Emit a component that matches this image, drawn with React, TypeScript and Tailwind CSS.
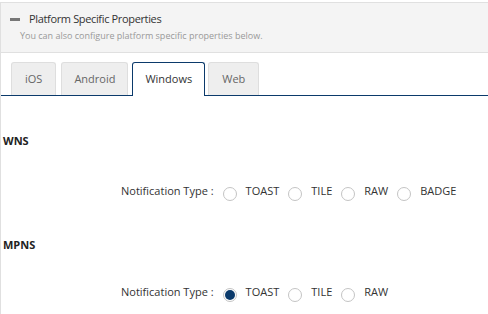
import React from "react";

function Radio({ checked }: { checked?: boolean }) {
  return (
    <span className="flex items-center justify-center w-[14px] h-[14px] rounded-full border border-[#c4c4c4] bg-white shrink-0 mt-[5px]">
      {checked && <span className="block w-[10px] h-[10px] rounded-full bg-[#0b3a6b]" />}
    </span>
  );
}

function Row({ options, checkedIndex }: { options: string[]; checkedIndex: number }) {
  return (
    <div className="flex items-start h-[18px] pl-[120px] text-[11px] leading-[18px] text-[#333]">
      <span className="mr-[9px]">Notification Type :</span>
      {options.map((o, i) => (
        <span key={o} className="flex items-start mr-[9px]">
          <Radio checked={i === checkedIndex} />
          <span className="ml-[9px]">{o}</span>
        </span>
      ))}
    </div>
  );
}

export default function App() {
  return (
    <div
      className="w-[488px] h-[314px] bg-white overflow-hidden pt-[2px]"
      style={{ fontFamily: '"Open Sans", "Noto Sans", sans-serif' }}
    >
      <div className="border-l border-[#e0e0e0] h-full">
        <div className="bg-[#f4f4f4] border-t border-b border-[#e0e0e0] h-[51px] pl-[9px] pt-[7px]">
          <div className="flex items-center h-[18px]">
            <span className="block w-[10px] h-[3px] bg-[#777] mr-[9px]" />
            <span className="text-[11px] tracking-[-0.35px] text-[#333] leading-[18px]">
              Platform Specific Properties
            </span>
          </div>
          <div className="text-[9px] text-[#999] leading-[14px] mt-[1px] pl-[10px]">
            You can also configure platform specific properties below.
          </div>
        </div>
        <div className="flex items-end pl-[10px] pt-[9px] border-b border-[#0b3a6b]">
          <div className="h-[33px] mr-[5px] px-[13px] flex items-center bg-[#eeeeee] border border-b-0 border-[#dedede] rounded-t-[3px] text-[11px] text-[#666]">
            iOS
          </div>
          <div className="h-[33px] mr-[4px] px-[12px] flex items-center bg-[#eeeeee] border border-b-0 border-[#dedede] rounded-t-[3px] text-[11px] text-[#666]">
            Android
          </div>
          <div className="h-[34px] -mb-[1px] mr-[3px] px-[12px] flex items-center bg-white border border-b-0 border-[#0b3a6b] rounded-t-[3px] text-[11px] text-[#333]">
            Windows
          </div>
          <div className="h-[33px] px-[13px] flex items-center bg-[#eeeeee] border border-b-0 border-[#dedede] rounded-t-[3px] text-[11px] text-[#666]">
            Web
          </div>
        </div>
        <div className="pl-[2px] pt-[37px] text-[11px] font-bold text-[#222] leading-[16px]">WNS</div>
        <div className="mt-[33px]">
          <Row options={["TOAST", "TILE", "RAW", "BADGE"]} checkedIndex={-1} />
        </div>
        <div className="pl-[2px] mt-[37px] text-[11px] font-bold text-[#222] leading-[16px]">MPNS</div>
        <div className="mt-[30px]">
          <Row options={["TOAST", "TILE", "RAW"]} checkedIndex={0} />
        </div>
      </div>
    </div>
  );
}
